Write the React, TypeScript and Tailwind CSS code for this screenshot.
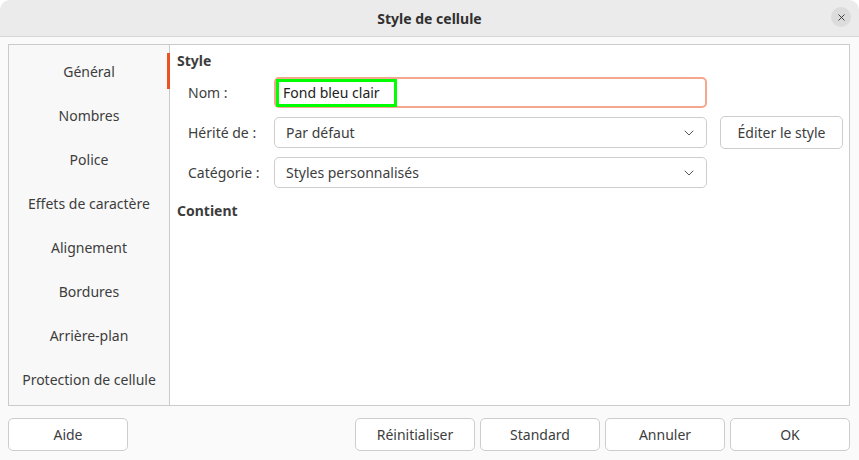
import { ChevronDown, X } from 'lucide-react';

const tabs = [
  'Général',
  'Nombres',
  'Police',
  'Effets de caractère',
  'Alignement',
  'Bordures',
  'Arrière-plan',
  'Protection de cellule',
];

function Select({ value }: { value: string }) {
  return (
    <div className="flex h-[31px] w-[433px] items-center justify-between rounded-[5px] border border-[#cdcdcd] bg-white pl-[11px] pr-[9px]">
      <span>{value}</span>
      <ChevronDown size={16} strokeWidth={1.5} className="text-[#555]" />
    </div>
  );
}

function Button({ label, className = '' }: { label: string; className?: string }) {
  return (
    <div
      className={`flex h-[33px] w-[120px] items-center justify-center rounded-[5px] border border-[#cdcdcd] bg-white ${className}`}
    >
      {label}
    </div>
  );
}

export default function App() {
  return (
    <div
      className="flex h-[460px] w-[859px] flex-col overflow-hidden rounded-t-[10px] bg-[#fafafa] text-[14px] text-[#3d3d3d]"
      style={{ fontFamily: '"Noto Sans", "Open Sans", sans-serif' }}
    >
      {/* titre */}
      <div className="relative flex h-[37px] shrink-0 items-center justify-center border-b border-[#d6d6d6] bg-[#ebebeb]">
        <span className="font-bold text-[#303030]">Style de cellule</span>
        <div className="absolute right-[8px] top-[7px] flex h-[20px] w-[20px] items-center justify-center rounded-full bg-[#dcdcdc] text-[#333]">
          <X size={11} strokeWidth={2} />
        </div>
      </div>

      <div className="flex flex-1 flex-col pl-[8px] pr-[9px] pt-[7px]">
        <div className="flex h-[362px] border border-[#cbcbcb]">
          {/* onglets */}
          <div className="flex w-[161px] shrink-0 flex-col border-r border-[#cbcbcb] bg-[#f8f8f8] pt-[4px]">
            {tabs.map((t, i) => (
              <div key={t} className="relative flex h-[44px] items-center justify-center">
                {t}
                {i === 0 && <div className="absolute right-[-1px] top-[4px] h-[36px] w-[3px] bg-[#e95420]" />}
              </div>
            ))}
          </div>

          {/* contenu */}
          <div className="flex-1 bg-white pl-[7px] pt-[5px]">
            <div className="font-bold">Style</div>
            <div className="mt-[6px] flex flex-col gap-[8px] pl-[11px]">
              <div className="flex items-center">
                <span className="w-[86px]">Nom :</span>
                <div className="flex h-[31px] w-[433px] items-center rounded-[5px] border-2 border-[#f5a78d] bg-white pl-0">
                  <div className="flex h-[28px] items-center border-[3px] border-[#00ff00] pl-[4px] pr-[14px] text-[#222]">
                    Fond bleu clair
                  </div>
                </div>
              </div>
              <div className="flex items-center">
                <span className="w-[86px]">Hérité de :</span>
                <Select value="Par défaut" />
                <Button label="Éditer le style" className="ml-[13px] h-[31px] w-[123px]" />
              </div>
              <div className="flex items-center">
                <span className="w-[86px]">Catégorie :</span>
                <Select value="Styles personnalisés" />
              </div>
            </div>
            <div className="mt-[12px] font-bold">Contient</div>
          </div>
        </div>

        {/* boutons */}
        <div className="mt-[12px] flex items-center gap-[5px]">
          <Button label="Aide" />
          <div className="flex-1" />
          <Button label="Réinitialiser" />
          <Button label="Standard" />
          <Button label="Annuler" />
          <Button label="OK" />
        </div>
      </div>
    </div>
  );
}
